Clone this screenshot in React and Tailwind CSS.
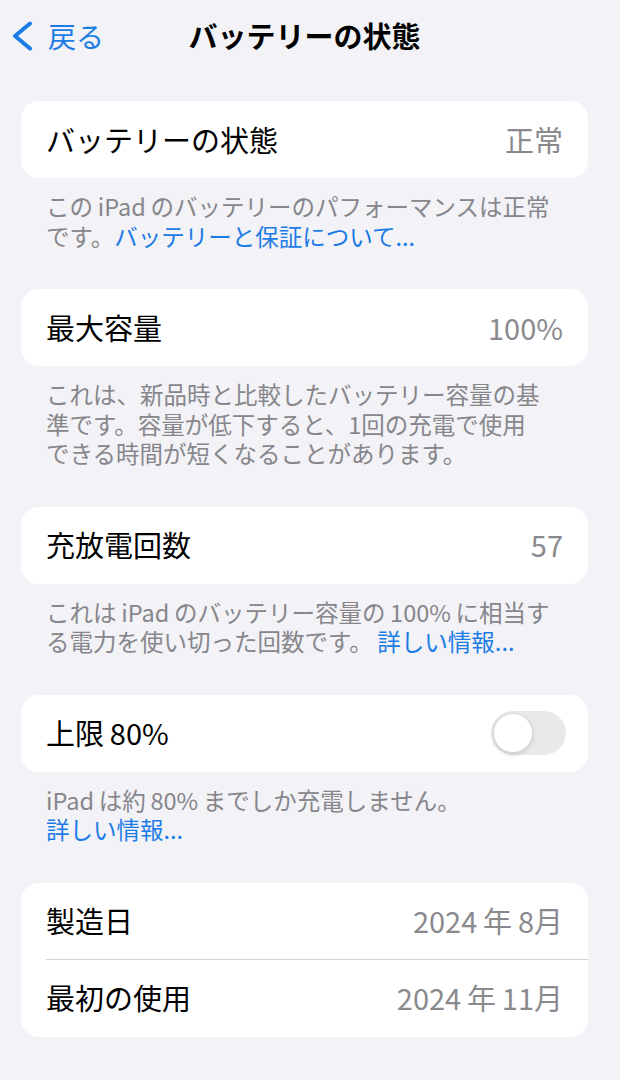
import React from "react";

const font = { fontFamily: '"Noto Sans CJK JP", "Noto Sans", sans-serif' };
const t = "\u2009";

function Row({ label, value, children, divider }) {
  return (
    <div className="relative flex h-[77px] items-center justify-between pl-[25px] pr-[25px]">
      <span className="text-[29px] text-black">{label}</span>
      {value !== undefined ? (
        <span className="text-[29px] text-[#8a8a8e]">{value}</span>
      ) : (
        children
      )}
      {divider && (
        <div className="absolute bottom-0 left-[25px] right-0 h-px bg-[#d1d1d6]" />
      )}
    </div>
  );
}

function Card({ children }) {
  return <div className="overflow-hidden rounded-[18px] bg-white">{children}</div>;
}

function Footer({ children }) {
  return (
    <div className="px-[25px] pt-[14px] pb-[38px] text-[23.5px] leading-[29.5px] text-[#86868b]">
      {children}
    </div>
  );
}

const Link = ({ children }) => <span className="text-[#1c7ce6]">{children}</span>;

function Toggle() {
  return (
    <div className="mr-[-3px] flex h-[44px] w-[75px] items-center rounded-full bg-[#e9e9eb] p-[2px]">
      <div className="h-[40px] w-[40px] rounded-full border border-[#d6d6d8] bg-white shadow-[0_2px_4px_rgba(0,0,0,0.12)]" />
    </div>
  );
}

export default function App() {
  return (
    <div className="min-h-[1080px] w-[620px] bg-[#f2f2f7]" style={font}>
      <div className="w-[609px]">
        <div className="grid h-[72px] grid-cols-[1fr_auto_1fr] items-center">
          <div className="flex items-center gap-[15px] pl-[11px]">
            <svg width="22" height="30" viewBox="0 0 22 30" fill="none">
              <path
                d="M19 2.5 L4 15 L19 27.5"
                stroke="#1c7ce6"
                strokeWidth="4"
                strokeLinecap="round"
                strokeLinejoin="round"
              />
            </svg>
            <span className="text-[28px] text-[#1c7ce6]">戻る</span>
          </div>
          <div className="text-[29px] font-bold text-black">バッテリーの状態</div>
          <div />
        </div>

        <div className="px-[21px] pt-[29px]">
          <Card>
            <Row label="バッテリーの状態" value="正常" />
          </Card>
          <Footer>
            {`この${t}iPad${t}のバッテリーのパフォーマンスは正常`}
            <br />
            です。<Link>バッテリーと保証について...</Link>
          </Footer>

          <Card>
            <Row label="最大容量" value="100%" />
          </Card>
          <Footer>
            これは、新品時と比較したバッテリー容量の基
            <br />
            準です。容量が低下すると、1回の充電で使用
            <br />
            できる時間が短くなることがあります。
          </Footer>

          <Card>
            <Row label="充放電回数" value="57" />
          </Card>
          <Footer>
            {`これは${t}iPad${t}のバッテリー容量の${t}100%${t}に相当す`}
            <br />
            {`る電力を使い切った回数です。${t}`}
            <Link>詳しい情報...</Link>
          </Footer>

          <Card>
            <Row label={`上限${t}80%`}>
              <Toggle />
            </Row>
          </Card>
          <Footer>
            {`iPad${t}は約${t}80%${t}までしか充電しません。`}
            <br />
            <Link>詳しい情報...</Link>
          </Footer>

          <Card>
            <Row label="製造日" value={`2024${t}年${t}8月`} divider />
            <Row label="最初の使用" value={`2024${t}年${t}11月`} />
          </Card>
        </div>
      </div>
    </div>
  );
}
